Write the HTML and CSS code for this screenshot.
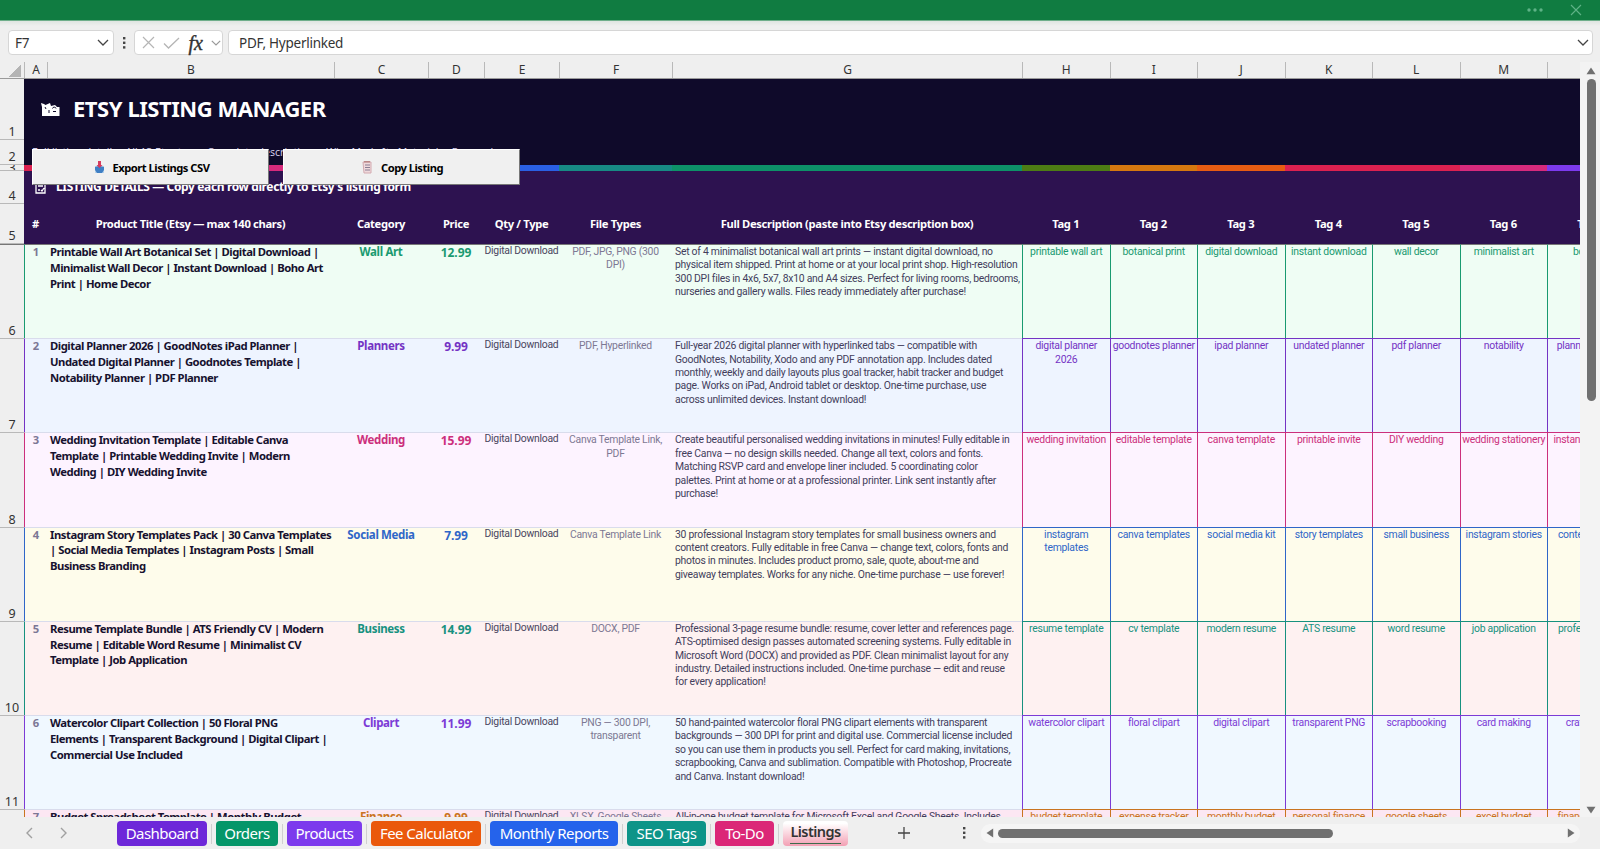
FILE: index.html
```html
<!DOCTYPE html>
<html lang="en">
<head>
    <meta charset="UTF-8">
    <meta name="viewport" content="width=device-width, initial-scale=1.0">
    <title>Etsy Listing Manager</title>
    <link rel="stylesheet" href="styles.css">
</head>
<body>
    <div class="titlebar">
        <svg width="18" height="6" viewBox="0 0 18 6" fill="#5fb387"><circle cx="3" cy="3" r="1.7"/><circle cx="9" cy="3" r="1.7"/><circle cx="15" cy="3" r="1.7"/></svg>
        <svg width="12" height="12" viewBox="0 0 12 12" stroke="#5fb387" stroke-width="1.1"><path d="M1 1l10 10M11 1L1 11"/></svg>
    </div>

    <div class="formula-bar">
        <div class="box name-box">
            <span>F7</span>
            <svg width="12" height="7" viewBox="0 0 12 7" fill="none" stroke="#444" stroke-width="1.3"><path d="M1 1l5 5 5-5"/></svg>
        </div>
        <svg class="dots" width="4" height="14" viewBox="0 0 4 14" fill="#444"><rect x="1" y="1" width="2.4" height="2.4"/><rect x="1" y="5.6" width="2.4" height="2.4"/><rect x="1" y="10.2" width="2.4" height="2.4"/></svg>
        <div class="box fx-box">
            <svg width="13" height="13" viewBox="0 0 13 13" fill="none" stroke="#b5b5b5" stroke-width="1.2"><path d="M1 1l11 11M12 1L1 12"/></svg>
            <svg width="17" height="12" viewBox="0 0 17 12" fill="none" stroke="#b5b5b5" stroke-width="1.3"><path d="M1 6.5l4.5 4.5L16 1"/></svg>
            <span class="fx">fx</span>
            <svg width="10" height="6" viewBox="0 0 10 6" fill="none" stroke="#999" stroke-width="1.2"><path d="M.8.8L5 5 9.2.8"/></svg>
        </div>
        <div class="box formula">
            <span>PDF, Hyperlinked</span>
            <svg width="12" height="7" viewBox="0 0 12 7" fill="none" stroke="#444" stroke-width="1.3"><path d="M1 1l5 5 5-5"/></svg>
        </div>
    </div>

    <div class="main">
        <div class="sheet">
            <div class="row col-heads">
                <div class="corner"></div>
                <div>A</div><div>B</div><div>C</div><div>D</div><div>E</div><div>F</div><div>G</div>
                <div>H</div><div>I</div><div>J</div><div>K</div><div>L</div><div>M</div><div></div>
            </div>
            <div class="band band-1">
                <div class="num">1</div>
                <div class="title">
                    <svg width="19" height="15" viewBox="0 0 19 15" fill="#fff"><path d="M0 1l3 1 1.500 1L9 1l1 3 4-1 2 2h2.500v9H1V5z"/><path d="M11.500 6.500a1.800 1.800 0 013.500 0M4 5l1 2M8 8v3M12 9.500h3" stroke="#0f0a2a" fill="none"/></svg>
                    <h1>ETSY LISTING MANAGER</h1>
                </div>
            </div>
            <div class="band band-2">
                <div class="num">2</div>
                <div class="subtitle">Full listing details · All 13 Etsy tags · Complete descriptions · Who Made It · Materials · Renewal</div>
            </div>
            <div class="row strip">
                <div class="num">3</div>
                <div class="c-red"></div><div class="c-pink"></div><div class="c-violet"></div><div class="c-violet"></div>
                <div class="c-blue"></div><div class="c-teal"></div><div class="c-green"></div><div class="c-olive"></div>
                <div class="c-amber"></div><div class="c-orange"></div><div class="c-red"></div><div class="c-red"></div>
                <div class="c-pink"></div><div class="c-violet"></div>
            </div>
            <div class="band band-4">
                <div class="num">4</div>
                <div class="section">
                    <svg width="11" height="12" viewBox="0 0 11 12" fill="none" stroke="#fff" stroke-width="1.300"><path d="M1 1h9v10H1zM3 4h5M3 8h2M6 8l1 1 2-3"/></svg>
                    <span>LISTING DETAILS — Copy each row directly to Etsy's listing form</span>
                </div>
            </div>
            <div class="row labels">
                <div class="num">5</div>
                <div>#</div><div>Product Title (Etsy — max 140 chars)</div><div>Category</div><div>Price</div>
                <div>Qty / Type</div><div>File Types</div><div>Full Description (paste into Etsy description box)</div>
                <div>Tag 1</div><div>Tag 2</div><div>Tag 3</div><div>Tag 4</div><div>Tag 5</div><div>Tag 6</div><div>Tag 7</div>
            </div>
            <div id="rows"></div>

            <button class="macro export">
                <svg width="11" height="13" viewBox="0 0 11 13"><path d="M1 5h9v7H1z" fill="#b9d3ea"/><path d="M1 6l4-1 5 1v3l-2 3H3L1 9z" fill="#3f7fc4"/><path d="M4 0h3v4h1.500L5.500 7 2.500 4H4z" fill="#d63a5e"/></svg>
                <span>Export Listings CSV</span>
            </button>
            <button class="macro copy">
                <svg width="11" height="13" viewBox="0 0 11 13"><path d="M1 1h8v11H2z" fill="#efd9dc" stroke="#d3aab0"/><path d="M3 4h5M3 6.500h5M3 9h5" stroke="#8b7f94"/><path d="M2 0h6v1.500H2z" fill="#b88"/></svg>
                <span>Copy Listing</span>
            </button>
        </div>

        <div class="vscroll">
            <svg width="10" height="8" viewBox="0 0 10 8" fill="#707070"><path d="M5 .5L9.500 7.200H.5z"/></svg>
            <div class="thumb"></div>
            <svg width="10" height="8" viewBox="0 0 10 8" fill="#707070"><path d="M5 7.500L.5.8h9z"/></svg>
        </div>
    </div>

    <div class="footer">
        <div class="nav">
            <svg width="7" height="12" viewBox="0 0 7 12" fill="none" stroke="#a0a0a0" stroke-width="1.400"><path d="M6 1L1 6l5 5"/></svg>
            <svg width="7" height="12" viewBox="0 0 7 12" fill="none" stroke="#a0a0a0" stroke-width="1.400"><path d="M1 1l5 5-5 5"/></svg>
        </div>
        <div class="tabs">
            <div class="tab dashboard"><span>Dashboard</span></div>
            <div class="tab orders"><span>Orders</span></div>
            <div class="tab products"><span>Products</span></div>
            <div class="tab fees"><span>Fee Calculator</span></div>
            <div class="tab reports"><span>Monthly Reports</span></div>
            <div class="tab seo"><span>SEO Tags</span></div>
            <div class="tab todo"><span>To-Do</span></div>
            <div class="tab active"><span>Listings</span></div>
        </div>
        <svg class="plus" width="12" height="12" viewBox="0 0 12 12" stroke="#444" stroke-width="1.300"><path d="M6 0v12M0 6h12"/></svg>
        <svg class="dots" width="4" height="14" viewBox="0 0 4 14" fill="#444"><rect x="1" y="1" width="2.400" height="2.400"/><rect x="1" y="5.600" width="2.400" height="2.400"/><rect x="1" y="10.200" width="2.400" height="2.400"/></svg>
        <div class="hscroll">
            <svg width="8" height="10" viewBox="0 0 8 10" fill="#707070"><path d="M.5 5L7.200.5v9z"/></svg>
            <div class="thumb"></div>
            <svg width="8" height="10" viewBox="0 0 8 10" fill="#707070"><path d="M7.500 5L.8.5v9z"/></svg>
        </div>
    </div>

    <script src="script.js"></script>
</body>
</html>
```

FILE: styles.css
```css
* { margin: 0; padding: 0; box-sizing: border-box; }
body {
    width: 1600px;
    height: 849px;
    overflow: hidden;
    display: flex;
    flex-direction: column;
    font-family: 'Noto Sans', 'Open Sans', sans-serif;
    background: #efefef;
    color: #333;
}
svg { flex: none; display: block; }

.titlebar {
    height: 21px;
    background: #107c41;
    border-bottom: 1px solid #6fae8b;
    display: flex;
    align-items: center;
    justify-content: flex-end;
    gap: 26px;
    padding: 0 18px 1px 0;
}

/* formula bar */
.formula-bar {
    height: 41px;
    padding: 9px 7px 0 8px;
    display: flex;
    align-items: flex-start;
    background: linear-gradient(#dfe5e1, #efefef 5px);
}
.box {
    height: 25px;
    background: #fff;
    border: 1px solid #d6d6d6;
    border-radius: 4px;
    display: flex;
    align-items: center;
    font-size: 13.5px;
    letter-spacing: -0.25px;
}
.name-box { width: 106px; padding: 0 4px 0 6px; justify-content: space-between; }
.formula-bar .dots { margin: 6px 8px 0 8px; }
.fx-box { width: 89px; padding: 0 1px 0 7px; justify-content: space-between; }
.fx {
    font-family: 'Liberation Serif', serif;
    font-style: italic;
    font-size: 20px;
    line-height: 20px;
    letter-spacing: 0;
    -webkit-text-stroke: 0.4px #333;
    color: #333;
}
.formula { flex: 1; margin-left: 5px; padding: 0 3px 0 10px; justify-content: space-between; }

/* sheet */
.main { height: 755px; display: flex; }
.sheet { position: relative; width: 1580px; overflow: hidden; }
.row {
    display: grid;
    grid-template-columns: 24px 23px 287px 94px 56px 75px 113px 350px repeat(7, 87.5px);
}
.col-heads { height: 17px; border-bottom: 1px solid #9a9a9a; font-size: 12px; line-height: 16px; text-align: center; }
.col-heads div + div { border-left: 1px solid #b9b9b9; }
.corner { background: linear-gradient(135deg, transparent 50%, #b4b4b4 50%) no-repeat 9px 3px / 12px 12px; }
.num {
    width: 24px;
    flex: none;
    display: flex;
    align-items: flex-end;
    justify-content: center;
    background: #efefef;
    border-bottom: 1px solid #b9b9b9;
    font-size: 12.5px;
    font-weight: normal;
    line-height: 15px;
    letter-spacing: 0;
    color: #333;
    overflow: hidden;
}
.band { display: flex; color: #fff; }
.band-1 { height: 61px; background: #0f0a2a; }
.band-2 { height: 25px; background: #0f0a2a; }
.band-4 { height: 33px; background: #2d1250; }
.title { display: flex; align-items: center; gap: 13px; padding: 0 0 4px 17px; }
.title svg { margin-top: 3px; }
.title h1 { font-size: 22px; line-height: 30px; font-weight: bold; letter-spacing: -0.45px; }
.subtitle { font-size: 10.5px; line-height: 15px; padding: 5px 0 0 8px; color: #cfc8e6; white-space: nowrap; }
.section { display: flex; align-items: center; gap: 10px; padding-left: 11px; font-size: 12px; font-weight: bold; letter-spacing: -0.37px; white-space: nowrap; }
.section span { line-height: 16px; margin-top: -1px; }
.strip { height: 6px; }
.strip .num { align-items: center; }
.c-red { background: #dc2150; }
.c-pink { background: #d62a7c; }
.c-violet { background: #7c3aed; }
.c-blue { background: #2a60e4; }
.c-teal { background: #178a84; }
.c-green { background: #0d9168; }
.c-olive { background: #4d7c14; }
.c-amber { background: #d5780f; }
.c-orange { background: #e65c12; }
.labels {
    height: 40px;
    background: #2d1250;
    color: #fff;
    font-size: 11.2px;
    font-weight: bold;
    letter-spacing: -0.33px;
    text-align: center;
    line-height: 39px;
    white-space: nowrap;
}
.labels .num { line-height: 15px; }

/* listing rows */
.listing { height: 94.2px; background: var(--bg); }
.listing > div { border-top: 1px solid #d9dcec; white-space: pre; }
.listing .num { border: 0; border-top: 1px solid #b9b9b9; }
.listing .idx { border-left: 1px solid var(--accent); text-align: center; font-size: 11.2px; line-height: 14px; font-weight: bold; color: #7c7795; }
.listing .name { padding-left: 3px; margin-bottom: -1px; font-size: 11.3px; line-height: 15.8px; font-weight: bold; letter-spacing: -0.48px; color: #17122f; }
.listing .name span { display: block; margin-top: -1px; }
.listing .cat, .listing .price { text-align: center; font-size: 11.5px; line-height: 14px; font-weight: bold; letter-spacing: -0.35px; color: var(--accent); }
.listing .price { font-size: 12px; line-height: 15px; letter-spacing: -0.1px; }
.listing .qty, .listing .files, .listing .desc, .listing .tag {
    font-family: Roboto, sans-serif;
    font-size: 10.4px;
    line-height: 13.4px;
    letter-spacing: -0.26px;
}
.listing .qty { text-align: center; color: #4a4660; line-height: 11px; }
.listing .files { text-align: center; color: #7d7893; }
.listing .desc { padding-left: 3px; color: #433e5c; }
.listing .tag { text-align: center; color: var(--accent); border-left: 1px solid var(--accent); border-top-color: var(--accent); overflow: hidden; }
.listing:first-child > div { border-top-color: #777; }

/* macro buttons floating over the sheet */
.macro {
    position: absolute;
    top: 87px;
    width: 237px;
    height: 36px;
    display: flex;
    align-items: center;
    justify-content: center;
    gap: 8px;
    background: #f0f0f0;
    border: 1px solid #fff;
    border-right-color: #777;
    border-bottom-color: #777;
    font: bold 11.2px 'Noto Sans', sans-serif;
    letter-spacing: -0.5px;
    color: #000;
}
.export { left: 32px; padding-left: 2px; }
.copy { left: 283px; padding-left: 2px; }

.vscroll { flex: 1; background: #f3f3f3; display: flex; flex-direction: column; align-items: center; padding: 5px 0 3px 2px; }
.vscroll .thumb { width: 9px; height: 322px; margin: 4px 0 auto; border-radius: 5px; background: #707070; }

/* footer */
.footer { height: 32px; display: flex; align-items: center; }
.nav { display: flex; gap: 27px; padding-left: 26px; width: 117px; }
.tabs { display: flex; gap: 9px; }
.tab {
    position: relative;
    height: 25px;
    border-radius: 4px;
    color: #fff;
    font-size: 15px;
    line-height: 25px;
    letter-spacing: -0.55px;
    text-align: center;
    white-space: nowrap;
}
.tab + .tab::before { content: ''; position: absolute; left: -5px; top: 3px; width: 1px; height: 20px; background: #cfcfcf; }
.dashboard { width: 90px; background: #6d28d9; }
.orders { width: 62px; background: #059669; }
.products { width: 75px; background: #7c3aed; }
.fees { width: 110px; background: #ea580c; }
.reports { width: 128px; background: #2563eb; }
.seo { width: 79px; background: #0d9488; }
.todo { width: 59px; background: #db2777; }
.active { width: 65px; background: linear-gradient(#fff 10%, #f3a0b4); color: #333; font-size: 14.5px; font-weight: 600; line-height: 20px; }
.active span { display: inline-block; height: 23px; border-bottom: 1px solid #3c6b4c; }
.plus { margin-left: 50px; }
.footer .dots { margin: 0 15px 0 52px; }
.hscroll { flex: 1; margin-right: 20px; height: 19px; border-radius: 9px; background: #f5f5f5; display: flex; align-items: center; padding: 0 5px; }
.hscroll .thumb { width: 335px; height: 9px; margin: 0 auto 0 4px; border-radius: 5px; background: #707070; }
```

FILE: script.js
```js
const listings = [
    {
        row: 6, bg: '#effdf4', accent: '#1a9a70', cat: 'Wall Art', price: '12.99',
        name: 'Printable Wall Art Botanical Set | Digital Download |\nMinimalist Wall Decor | Instant Download | Boho Art\nPrint | Home Decor',
        files: 'PDF, JPG, PNG (300\nDPI)',
        desc: 'Set of 4 minimalist botanical wall art prints — instant digital download, no\nphysical item shipped. Print at home or at your local print shop. High-resolution\n300 DPI files in 4x6, 5x7, 8x10 and A4 sizes. Perfect for living rooms, bedrooms,\nnurseries and gallery walls. Files ready immediately after purchase!',
        tags: ['printable wall art', 'botanical print', 'digital download', 'instant download', 'wall decor', 'minimalist art', 'boho art']
    },
    {
        row: 7, bg: '#eef4ff', accent: '#7433c4', cat: 'Planners', price: '9.99',
        name: 'Digital Planner 2026 | GoodNotes iPad Planner |\nUndated Digital Planner | Goodnotes Template |\nNotability Planner | PDF Planner',
        files: 'PDF, Hyperlinked',
        desc: 'Full-year 2026 digital planner with hyperlinked tabs — compatible with\nGoodNotes, Notability, Xodo and any PDF annotation app. Includes dated\nmonthly, weekly and daily layouts plus goal tracker, habit tracker and budget\npage. Works on iPad, Android tablet or desktop. One-time purchase, use\nacross unlimited devices. Instant download!',
        tags: ['digital planner\n2026', 'goodnotes planner', 'ipad planner', 'undated planner', 'pdf planner', 'notability', 'planner stickers']
    },
    {
        row: 8, bg: '#fdf3ff', accent: '#cc2f7c', cat: 'Wedding', price: '15.99',
        name: 'Wedding Invitation Template | Editable Canva\nTemplate | Printable Wedding Invite | Modern\nWedding | DIY Wedding Invite',
        files: 'Canva Template Link,\nPDF',
        desc: 'Create beautiful personalised wedding invitations in minutes! Fully editable in\nfree Canva — no design skills needed. Change all text, colors and fonts.\nMatching RSVP card and envelope liner included. 5 coordinating color\npalettes. Print at home or at a professional printer. Link sent instantly after\npurchase!',
        tags: ['wedding invitation', 'editable template', 'canva template', 'printable invite', 'DIY wedding', 'wedding stationery', 'instant download']
    },
    {
        row: 9, bg: '#fefceb', accent: '#2f66c8', cat: 'Social Media', price: '7.99',
        name: 'Instagram Story Templates Pack | 30 Canva Templates\n| Social Media Templates | Instagram Posts | Small\nBusiness Branding',
        files: 'Canva Template Link',
        desc: '30 professional Instagram story templates for small business owners and\ncontent creators. Fully editable in free Canva — change text, colors, fonts and\nphotos in minutes. Includes product promo, sale, quote, about-me and\ngiveaway templates. Works for any niche. One-time purchase — use forever!',
        tags: ['instagram\ntemplates', 'canva templates', 'social media kit', 'story templates', 'small business', 'instagram stories', 'content creator']
    },
    {
        row: 10, bg: '#fef1f1', accent: '#17917f', cat: 'Business', price: '14.99',
        name: 'Resume Template Bundle | ATS Friendly CV | Modern\nResume | Editable Word Resume | Minimalist CV\nTemplate | Job Application',
        files: 'DOCX, PDF',
        desc: 'Professional 3-page resume bundle: resume, cover letter and references page.\nATS-optimised design passes automated screening systems. Fully editable in\nMicrosoft Word (DOCX) and provided as PDF. Clean minimalist layout for any\nindustry. Detailed instructions included. One-time purchase — edit and reuse\nfor every application!',
        tags: ['resume template', 'cv template', 'modern resume', 'ATS resume', 'word resume', 'job application', 'professional cv']
    },
    {
        row: 11, bg: '#f0f8ff', accent: '#7c3bd6', cat: 'Clipart', price: '11.99',
        name: 'Watercolor Clipart Collection | 50 Floral PNG\nElements | Transparent Background | Digital Clipart |\nCommercial Use Included',
        files: 'PNG — 300 DPI,\ntransparent',
        desc: '50 hand-painted watercolor floral PNG clipart elements with transparent\nbackgrounds — 300 DPI for print and digital use. Commercial license included\nso you can use them in products you sell. Perfect for card making, invitations,\nscrapbooking, Canva and sublimation. Compatible with Photoshop, Procreate\nand Canva. Instant download!',
        tags: ['watercolor clipart', 'floral clipart', 'digital clipart', 'transparent PNG', 'scrapbooking', 'card making', 'craft supply']
    },
    {
        row: 12, bg: '#fce7f3', accent: '#c97420', cat: 'Finance', price: '9.99',
        name: 'Budget Spreadsheet Template | Monthly Budget',
        files: 'XLSX, Google Sheets',
        desc: 'All-in-one budget template for Microsoft Excel and Google Sheets. Includes',
        tags: ['budget template', 'expense tracker', 'monthly budget', 'personal finance', 'google sheets', 'excel budget', 'finance planner']
    }
];

document.getElementById('rows').innerHTML = listings.map((l, i) => `
    <div class="row listing" style="--bg: ${l.bg}; --accent: ${l.accent}">
        <div class="num">${l.row}</div>
        <div class="idx">${i + 1}</div>
        <div class="name"><span>${l.name}</span></div>
        <div class="cat">${l.cat}</div>
        <div class="price">${l.price}</div>
        <div class="qty">Digital Download</div>
        <div class="files">${l.files}</div>
        <div class="desc">${l.desc}</div>
        ${l.tags.map(t => `<div class="tag">${t}</div>`).join('')}
    </div>`).join('');
```
